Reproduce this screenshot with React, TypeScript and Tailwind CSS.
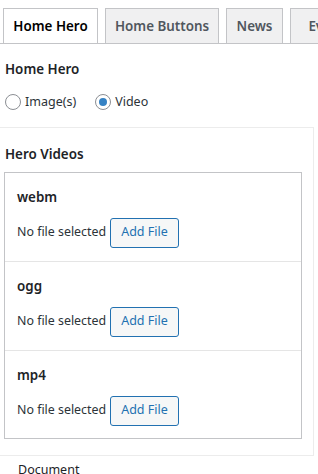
import React from 'react'

const tabs = [
  { label: 'Home Hero', w: 'w-[95px]', active: true },
  { label: 'Home Buttons', w: 'w-[114px]', active: false },
  { label: 'News', w: 'w-[57px]', active: false },
  { label: 'Events', w: 'w-[80px]', active: false },
]

const files = ['webm', 'ogg', 'mp4']

function Radio({ label, checked }: { label: string; checked?: boolean }) {
  return (
    <label className="flex items-center gap-[4px]">
      <span className="flex h-[16px] w-[16px] items-center justify-center rounded-full border border-[#8c8f94] bg-white">
        {checked && <span className="h-[8px] w-[8px] rounded-full bg-[#3582c4]" />}
      </span>
      <span className="text-[12.5px] text-[#2c3338]">{label}</span>
    </label>
  )
}

export default function App() {
  return (
    <div className="h-[474px] w-[318px] overflow-hidden bg-white font-['Segoe_UI','Noto_Sans',sans-serif] text-[#1d2327]">
      <div className="flex gap-[7px] overflow-hidden border-b border-[#c3c4c7] pl-[3px] pt-[8px]">
        {tabs.map((t) => (
          <div
            key={t.label}
            className={`-mb-px flex h-[36px] shrink-0 items-center justify-center border border-[#c3c4c7] text-[13.4px] font-semibold whitespace-nowrap ${t.w} ${
              t.active ? 'border-b-white bg-white text-black' : 'bg-[#f0f0f1] text-[#50575e]'
            }`}
          >
            {t.label}
          </div>
        ))}
      </div>

      <div className="px-[5px] pt-[15px]">
        <h2 className="text-[13.4px] leading-[20px] font-semibold">Home Hero</h2>
        <div className="mt-[14px] flex gap-[19px]">
          <Radio label="Image(s)" />
          <Radio label="Video" checked />
        </div>
      </div>

      <div className="mt-[15px] w-[314px] border-t border-r border-b border-[#ececec] pt-[16px] pb-[16px]">
        <h3 className="px-[5px] text-[13.4px] leading-[20px] font-semibold">Hero Videos</h3>
        <div className="mt-[8px] ml-[4px] w-[298px] border border-[#c3c4c7]">
          {files.map((f, i) => (
            <div
              key={f}
              className={`px-[12px] pt-[14px] ${i < files.length - 1 ? 'border-b border-[#e5e5e5] pb-[13px]' : 'pb-[12px]'}`}
            >
              <div className="text-[13.4px] leading-[20px] font-semibold">{f}</div>
              <div className="mt-[11px] flex items-center gap-[4px]">
                <span className="text-[12.4px] text-[#2c3338]">No file selected</span>
                <button className="h-[30px] rounded-[3px] border border-[#2271b1] bg-[#f6f7f7] px-[10px] text-[12.5px] text-[#2271b1]">
                  Add File
                </button>
              </div>
            </div>
          ))}
        </div>
      </div>

      <div className="pl-[18px] pt-[5px] text-[12.5px] leading-[18px] text-[#1d2327]">Document</div>
    </div>
  )
}
